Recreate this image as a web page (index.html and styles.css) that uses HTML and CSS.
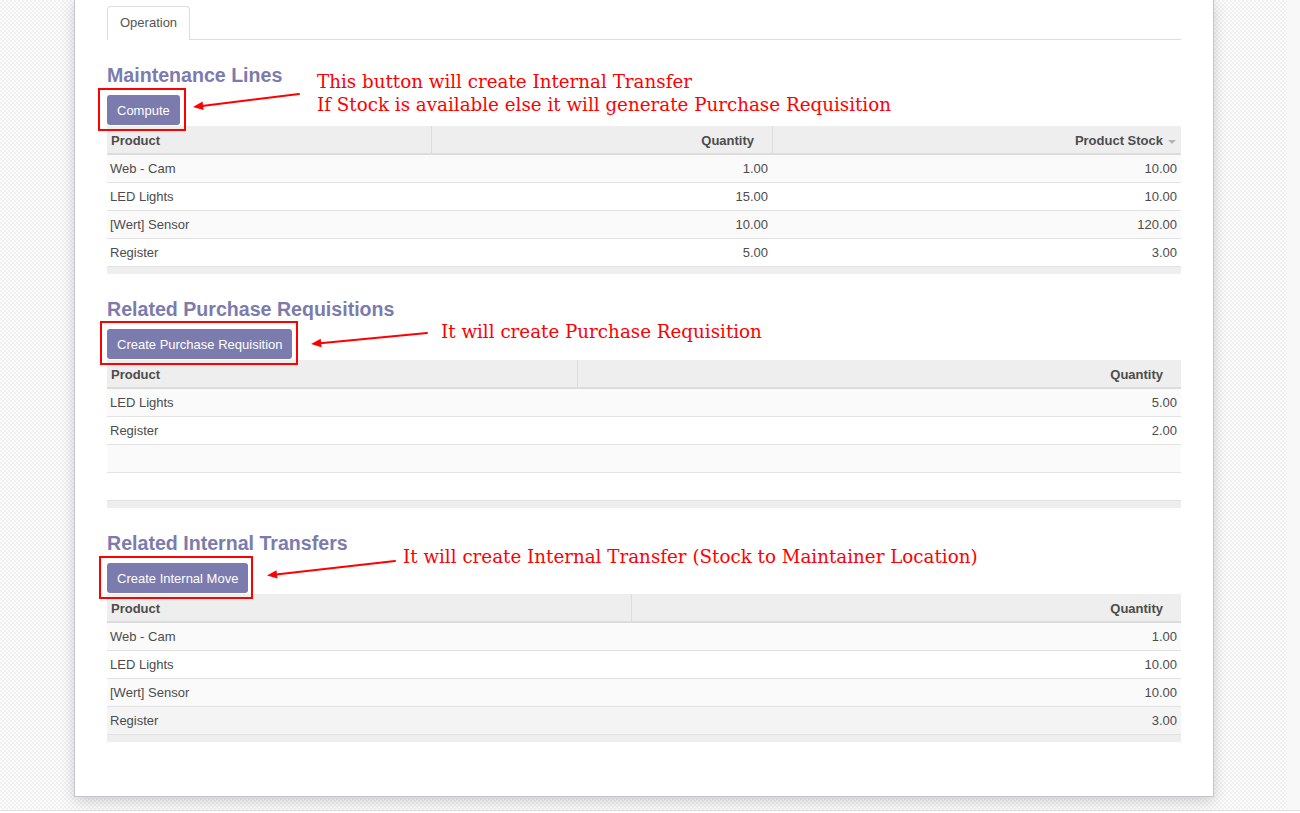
FILE: index.html
```html
<!DOCTYPE html>
<html>
<head>
<meta charset="utf-8">
<title>Maintenance</title>
<link rel="stylesheet" href="styles.css">
</head>
<body>
<div class="page">
  <div class="canvas">
    <div class="sheet">
      <div class="tabs"><div class="tab">Operation</div></div>

      <section class="group">
        <h2 class="sep">Maintenance Lines</h2>
        <button class="btn">Compute</button>
        <table class="list">
          <colgroup><col class="c324"><col class="c341"><col></colgroup>
          <thead>
            <tr><th>Product</th><th class="num">Quantity</th><th class="num sorted">Product Stock<span class="caret"></span></th></tr>
          </thead>
          <tbody>
            <tr><td>Web - Cam</td><td class="num">1.00</td><td class="num">10.00</td></tr>
            <tr><td>LED Lights</td><td class="num">15.00</td><td class="num">10.00</td></tr>
            <tr><td>[Wert] Sensor</td><td class="num">10.00</td><td class="num">120.00</td></tr>
            <tr><td>Register</td><td class="num">5.00</td><td class="num">3.00</td></tr>
          </tbody>
          <tfoot><tr><td></td><td></td><td></td></tr></tfoot>
        </table>
      </section>

      <section class="group">
        <h2 class="sep">Related Purchase Requisitions</h2>
        <button class="btn">Create Purchase Requisition</button>
        <table class="list">
          <colgroup><col class="c470"><col></colgroup>
          <thead>
            <tr><th>Product</th><th class="num">Quantity</th></tr>
          </thead>
          <tbody>
            <tr><td>LED Lights</td><td class="num">5.00</td></tr>
            <tr><td>Register</td><td class="num">2.00</td></tr>
            <tr><td>&nbsp;</td><td>&nbsp;</td></tr>
            <tr><td>&nbsp;</td><td>&nbsp;</td></tr>
          </tbody>
          <tfoot><tr><td></td><td></td></tr></tfoot>
        </table>
      </section>

      <section class="group">
        <h2 class="sep">Related Internal Transfers</h2>
        <button class="btn">Create Internal Move</button>
        <table class="list">
          <colgroup><col class="c524"><col></colgroup>
          <thead>
            <tr><th>Product</th><th class="num">Quantity</th></tr>
          </thead>
          <tbody>
            <tr><td>Web - Cam</td><td class="num">1.00</td></tr>
            <tr><td>LED Lights</td><td class="num">10.00</td></tr>
            <tr><td>[Wert] Sensor</td><td class="num">10.00</td></tr>
            <tr class="hover"><td>Register</td><td class="num">3.00</td></tr>
          </tbody>
          <tfoot><tr><td></td><td></td></tr></tfoot>
        </table>
      </section>

      <!-- annotation overlay -->
      <div class="mark mark1"></div>
      <div class="mark mark2"></div>
      <div class="mark mark3"></div>
      <svg class="arrows" width="1138" height="797" viewBox="75 0 1138 797" xmlns="http://www.w3.org/2000/svg">
        <g stroke="#f00" stroke-width="2" fill="none" stroke-linecap="round">
          <line x1="202" y1="106" x2="299" y2="94"/>
          <line x1="320" y1="343.2" x2="427" y2="333"/>
          <line x1="276" y1="574.5" x2="395" y2="561"/>
        </g>
        <g fill="#f00">
          <polygon points="193,107 203.6,110 202.6,101.6"/>
          <polygon points="311,344 321.5,347.2 320.7,338.8"/>
          <polygon points="267,575.5 277.5,578.4 276.5,570.2"/>
        </g>
      </svg>
      <div class="note note1">This button will create Internal Transfer<br>If Stock is available else it will generate Purchase Requisition</div>
      <div class="note note2">It will create Purchase Requisition</div>
      <div class="note note3">It will create Internal Transfer (Stock to Maintainer Location)</div>
    </div>
  </div>
  <div class="strip"></div>
</div>
<div class="floor"></div>
</body>
</html>
```

FILE: styles.css
```css
html, body {
  margin: 0;
  padding: 0;
  background: #ffffff;
}

body {
  font-family: "Liberation Sans", Arial, sans-serif;
  font-size: 13px;
  color: #4c4c4c;
  overflow: hidden;
}

.page {
  display: flex;
  height: 810px;
  border-bottom: 1px solid #e0e0e0;
}

.canvas {
  flex: 1;
  padding-left: 74px;
  background: repeating-conic-gradient(#f1f1f1 0 25%, #fcfcfc 0 50%) 0 0 / 4px 4px;
}

.strip {
  width: 13px;
  background: #f8f8f8;
}

.floor {
  height: 2px;
  background: #ffffff;
}

.sheet {
  position: relative;
  width: 1074px;
  height: 742px;
  padding: 6px 32px 48px;
  background: #ffffff;
  border: 1px solid #c4c4d0;
  border-top: none;
  box-shadow: 0 4px 14px rgba(0, 0, 0, 0.18);
}

/* tabs */
.tabs {
  display: flex;
  border-bottom: 1px solid #dddddd;
}

.tab {
  padding: 7px 12px 8px;
  line-height: 18px;
  border: 1px solid #dddddd;
  border-bottom: none;
  border-radius: 4px 4px 0 0;
  background: #ffffff;
  margin-bottom: -1px;
  color: #555555;
}

/* groups */
.sep {
  margin: 24px 0 9px;
  font-size: 19.6px;
  line-height: 22px;
  font-weight: bold;
  color: #7c7bad;
}

.btn {
  display: block;
  margin: 0 0 1px;
  padding: 7px 10px 5px;
  line-height: 18px;
  border: none;
  border-radius: 3px;
  background: #7c7bad;
  color: #ffffff;
  font-family: "Liberation Sans", Arial, sans-serif;
  font-size: 13px;
}

/* list tables */
.list {
  width: 100%;
  table-layout: fixed;
  border-collapse: separate;
  border-spacing: 0;
}

.c324 { width: 324px; }
.c341 { width: 341px; }
.c470 { width: 470px; }
.c524 { width: 524px; }

.list th {
  background: #eeeeee;
  text-align: left;
  font-weight: bold;
  color: #4c4c4c;
  padding: 2px 4px 0;
  line-height: 25px;
  border-bottom: 2px solid #dcdcdc;
  white-space: nowrap;
}

.list th + th {
  border-left: 1px solid #dddddd;
}

.list th.num {
  text-align: right;
  padding-right: 18px;
}

.list th.sorted {
  padding-right: 5px;
}

.caret {
  display: inline-block;
  vertical-align: middle;
  margin-left: 5px;
  width: 0;
  height: 0;
  border-top: 4px solid #b5b5b5;
  border-left: 4px solid transparent;
  border-right: 4px solid transparent;
}

.list td {
  padding: 1px 3px 0;
  line-height: 26px;
  border-bottom: 1px solid #e2e2e2;
  white-space: nowrap;
}

.list td.num {
  text-align: right;
  padding-right: 4px;
}

.list tbody tr:nth-child(odd) td {
  background: #fafafa;
}

.list tbody tr.hover td {
  background: #f4f4f4;
}

.list tfoot td {
  height: 7px;
  padding: 0;
  line-height: 0;
  font-size: 0;
  border: none;
  background: #eeeeee;
}

/* annotations */
.mark {
  position: absolute;
  box-sizing: border-box;
  border: 2px solid #f00;
}

.mark1 { left: 23px; top: 88px; width: 88px; height: 43px; }
.mark2 { left: 25px; top: 321px; width: 198px; height: 44px; }
.mark3 { left: 24px; top: 556px; width: 154px; height: 43px; }

.arrows {
  position: absolute;
  left: 0;
  top: 0;
  pointer-events: none;
}

.note {
  position: absolute;
  font-family: "DejaVu Serif", serif;
  font-size: 18.3px;
  line-height: 23px;
  color: #f00;
  white-space: nowrap;
}

.note1 { left: 242px; top: 70px; }
.note2 { left: 366px; top: 320px; }
.note3 { left: 328px; top: 545px; }
```
